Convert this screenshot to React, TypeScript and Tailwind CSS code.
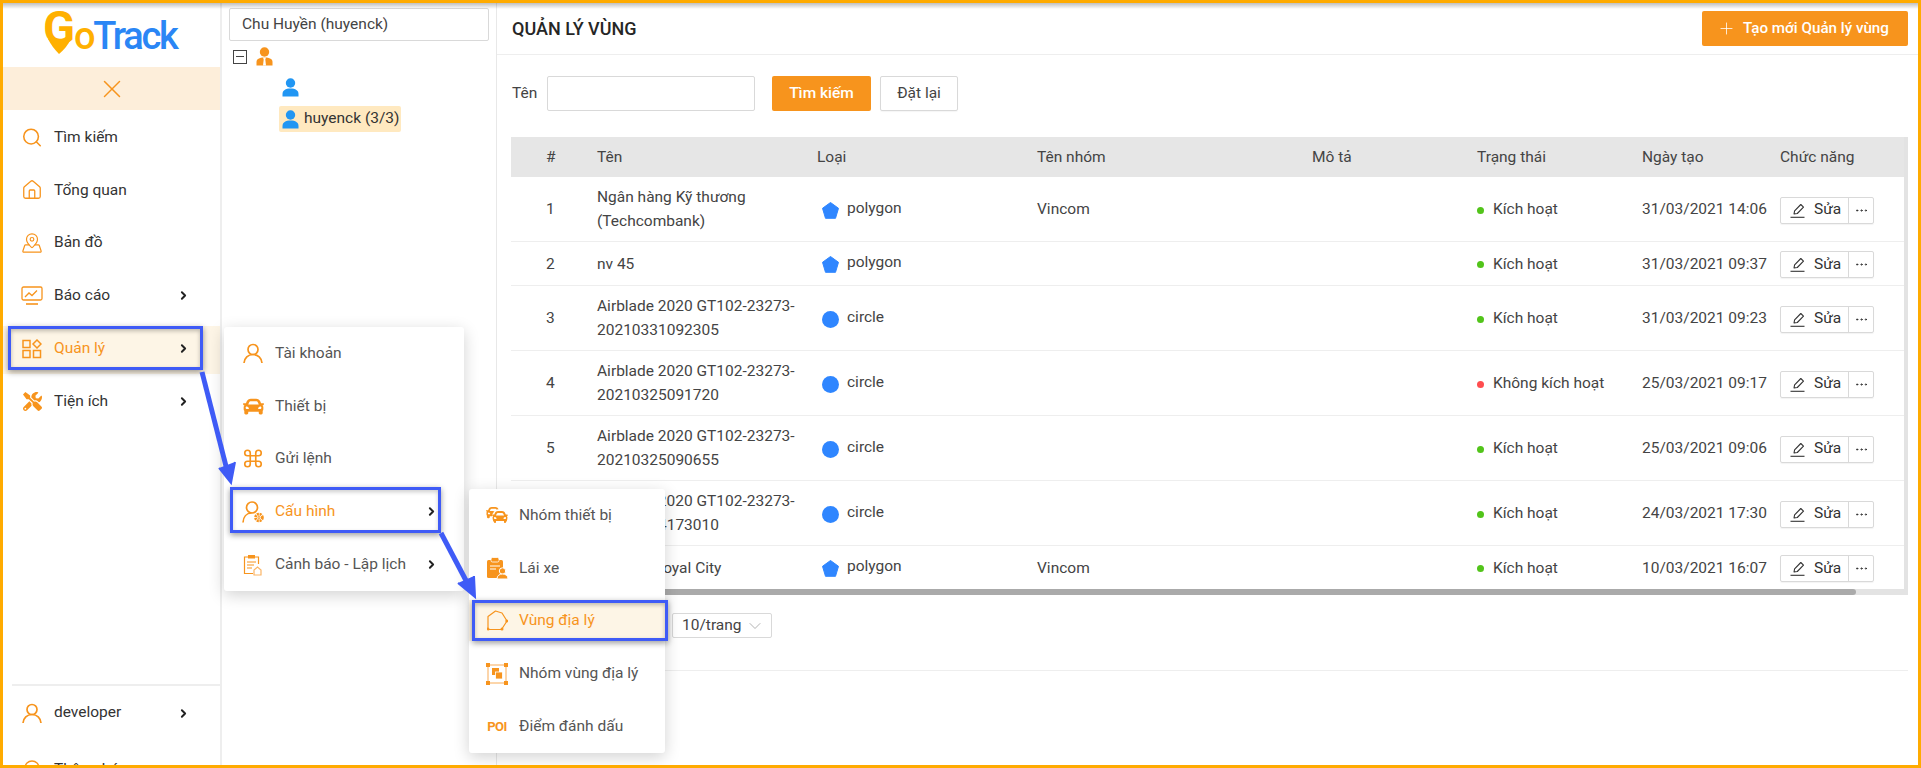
import React from 'react';
import { ChevronRight, Command, House, MapPinned, Plus, Search, X, ChevronDown, Ellipsis } from 'lucide-react';
import { FaCar, FaTools } from 'react-icons/fa';

const ORANGE = '#f7941d';

const Arrow = ({ className = '' }: { className?: string }) => (
  <ChevronRight size={13} strokeWidth={3.6} className={`text-[#222] ${className}`} />
);

function PersonIcon({ color = '#2196f3' }: { color?: string }) {
  return (
    <svg width="17" height="19" viewBox="0 0 17 19" fill={color}>
      <circle cx="8.5" cy="5" r="4.7" />
      <path d="M0.5 18.5v-2.5c0-3.6 3-5.5 8-5.5s8 1.9 8 5.5v2.5z" />
    </svg>
  );
}

function ManagerIcon() {
  return (
    <svg width="17" height="19" viewBox="0 0 17 19">
      <circle cx="8.5" cy="5" r="4.7" fill={ORANGE} />
      <path d="M0.5 18.5v-3.5c0-3 2.6-4.5 8-4.5s8 1.5 8 4.5v3.5z" fill={ORANGE} />
      <path d="M7 10.5h3l-.7 2 .7 6H7l.7-6z" fill="#fff" />
    </svg>
  );
}

function ReportIcon() {
  return (
    <svg width="22" height="20" viewBox="0 0 22 20" fill="none" stroke={ORANGE} strokeWidth="1.3">
      <rect x="1" y="1" width="20" height="13" rx="1.5" />
      <path d="M4 11l4-4 3 2.5 5-5" />
      <path d="M5 18h12" strokeWidth="1.6" />
    </svg>
  );
}

function ManageIcon() {
  return (
    <svg width="20" height="20" viewBox="0 0 20 20" fill="none" stroke={ORANGE} strokeWidth="1.5">
      <rect x="1" y="1.5" width="7" height="7" />
      <rect x="1" y="11.5" width="7" height="7" />
      <rect x="11.5" y="11.5" width="7" height="7" />
      <path d="M15 1l4 4-4 4-4-4z" />
    </svg>
  );
}

function UserOutlineIcon() {
  return (
    <svg width="20" height="21" viewBox="0 0 20 21" fill="none" stroke={ORANGE} strokeWidth="1.7">
      <circle cx="10" cy="6.5" r="5" />
      <path d="M1 20c.4-5 4-8.5 9-8.5s8.600 3.500 9 8.500" />
    </svg>
  );
}

function UserGearIcon() {
  return (
    <svg width="22" height="22" viewBox="0 0 22 22" fill="none" stroke={ORANGE} strokeWidth="1.700">
      <circle cx="10" cy="6.500" r="5.500" />
      <path d="M1 21.500c.3-5.500 3.500-9.500 8.500-9.500" />
      <circle cx="17" cy="16.500" r="3.400" strokeWidth="2.800" strokeDasharray="2 .7" />
      <circle cx="17" cy="16.500" r="1" strokeWidth="1" />
    </svg>
  );
}

function AlertScheduleIcon() {
  return (
    <svg width="20" height="22" viewBox="0 0 20 22" fill="none" stroke="#fbb566" strokeWidth="1.200">
      <path d="M5 3H1.500v16.500H10" stroke={ORANGE} />
      <path d="M12 3h3.500v7" stroke={ORANGE} />
      <rect x="5" y="1" width="7" height="3.500" fill={ORANGE} stroke="none" />
      <path d="M4 8h9M4 11h7M4 14h5" stroke={ORANGE} />
      <path d="M11 21v-5l3.500-3 3.500 3v5z" />
    </svg>
  );
}

function CarsIcon() {
  return (
    <div className="relative w-[23px] h-[20px]">
      <FaCar size={15} color={ORANGE} className="absolute left-0 top-0" />
      <FaCar size={16} color={ORANGE} className="absolute right-0 bottom-0 bg-white rounded-full" />
    </div>
  );
}

function DriverIcon() {
  return (
    <svg width="22" height="22" viewBox="0 0 22 22">
      <rect x="1" y="3" width="16" height="18" rx="1.500" fill={ORANGE} />
      <rect x="5" y="0.500" width="8" height="4.500" rx="1.500" fill={ORANGE} stroke="#fff" strokeWidth="0.800" />
      <path d="M4 9h10M4 12h6" stroke="#fff" strokeWidth="1.200" />
      <circle cx="16.500" cy="14" r="3.200" fill={ORANGE} stroke="#fff" />
      <path d="M11 22c0-3.500 2.500-5 5.500-5s5.500 1.500 5.500 5z" fill={ORANGE} stroke="#fff" />
    </svg>
  );
}

function RegionIcon() {
  return (
    <svg width="21" height="21" viewBox="0 0 21 21" fill="none" stroke={ORANGE} strokeWidth="1.200">
      <path d="M1 19.500V6.500L8.500 1l6.500 2 5 8-5.500 8.500z" strokeLinejoin="round" />
      <circle cx="1" cy="19" r="0.900" fill={ORANGE} />
      <circle cx="15" cy="19" r="0.900" fill={ORANGE} />
      <circle cx="19.800" cy="11" r="0.900" fill={ORANGE} />
    </svg>
  );
}

function RegionGroupIcon() {
  return (
    <svg width="22" height="22" viewBox="0 0 22 22">
      <rect x="2" y="2" width="18" height="18" fill="none" stroke="#fbc88e" strokeWidth="1.500" />
      <rect x="0" y="0" width="4" height="4" fill={ORANGE} />
      <rect x="18" y="0" width="4" height="4" fill={ORANGE} />
      <rect x="0" y="18" width="4" height="4" fill={ORANGE} />
      <rect x="18" y="18" width="4" height="4" fill={ORANGE} />
      <rect x="6" y="5" width="7" height="7" fill={ORANGE} />
      <rect x="9.500" y="9" width="7" height="7" fill={ORANGE} stroke="#fff" strokeWidth="0.800" />
    </svg>
  );
}

function PenIcon() {
  return (
    <svg width="16" height="15" viewBox="0 0 16 15" fill="none" stroke="#333" strokeWidth="1.100">
      <path d="M4 11l.6-3.200L10.800 1.500l2.700 2.700-6.200 6.300z" strokeLinejoin="round" />
      <path d="M0.500 14.300h14" />
    </svg>
  );
}

const sideItems = [
  { label: 'Tìm kiếm', icon: <Search size={25} strokeWidth={1.700} color={ORANGE} /> },
  { label: 'Tổng quan', icon: <House size={24} strokeWidth={1.400} color={ORANGE} /> },
  { label: 'Bản đồ', icon: <MapPinned size={24} strokeWidth={1.300} color={ORANGE} /> },
  { label: 'Báo cáo', icon: <ReportIcon />, more: true },
  { label: 'Quản lý', icon: <ManageIcon />, more: true, active: true },
  { label: 'Tiện ích', icon: <FaTools size={19} color={ORANGE} />, more: true },
];

type MenuItem = { label: string; icon: React.ReactNode; more?: boolean; active?: boolean; tint?: boolean };

const accountMenu: MenuItem[] = [
  { label: 'Tài khoản', icon: <UserOutlineIcon /> },
  { label: 'Thiết bị', icon: <FaCar size={21} color={ORANGE} /> },
  { label: 'Gửi lệnh', icon: <Command size={25} strokeWidth={1.800} color={ORANGE} /> },
  { label: 'Cấu hình', icon: <UserGearIcon />, more: true, active: true },
  { label: 'Cảnh báo - Lập lịch', icon: <AlertScheduleIcon />, more: true },
];

const configMenu: MenuItem[] = [
  { label: 'Nhóm thiết bị', icon: <CarsIcon /> },
  { label: 'Lái xe', icon: <DriverIcon /> },
  { label: 'Vùng địa lý', icon: <RegionIcon />, active: true, tint: true },
  { label: 'Nhóm vùng địa lý', icon: <RegionGroupIcon /> },
  { label: 'Điểm đánh dấu', icon: <span className="text-[13px] font-bold tracking-[-0.500px] text-[#f7941d]">POI</span> },
];

const rows = [
  { name: 'Ngân hàng Kỹ thương (Techcombank)', type: 'polygon', group: 'Vincom', active: true, date: '31/03/2021 14:06' },
  { name: 'nv 45', type: 'polygon', group: '', active: true, date: '31/03/2021 09:37' },
  { name: 'Airblade 2020 GT102-23273-20210331092305', type: 'circle', group: '', active: true, date: '31/03/2021 09:23' },
  { name: 'Airblade 2020 GT102-23273-20210325091720', type: 'circle', group: '', active: false, date: '25/03/2021 09:17' },
  { name: 'Airblade 2020 GT102-23273-20210325090655', type: 'circle', group: '', active: true, date: '25/03/2021 09:06' },
  { name: 'Airblade 2020 GT102-23273-20210324173010', type: 'circle', group: '', active: true, date: '24/03/2021 17:30' },
  { name: 'Vincom Royal City', type: 'polygon', group: 'Vincom', active: true, date: '10/03/2021 16:07' },
];

function Flyout({ items, className, textLeft }: { items: MenuItem[]; className: string; textLeft: string }) {
  return (
    <div className={`absolute z-20 bg-white rounded-[3px] shadow-[0_4px_16px_rgba(0,0,0,0.18)] ${className}`}>
      {items.map((item) => (
        <div key={item.label} className={`flex items-center ${textLeft} ${item.tint ? 'h-[41px] my-[5.900px] bg-[#fdf5e6]' : 'h-[52.800px]'}`}>
          <div className="w-[22px] flex justify-center shrink-0">{item.icon}</div>
          <span className={`ml-[11px] ${item.active ? 'text-[#f7941d]' : 'text-[#555]'}`}>{item.label}</span>
          {item.more && <Arrow className="absolute right-[26px]" />}
        </div>
      ))}
    </div>
  );
}

export default function App() {
  return (
    <div className="relative w-full h-[768px] overflow-hidden border-[3px] border-[#ffab00] bg-white font-[Roboto,sans-serif] text-[15.500px] text-[#444] flex">
      {/* Sidebar */}
      <aside className="w-[219px] shrink-0 flex flex-col justify-between border-r-2 border-[#eee] overflow-hidden">
        <div>
          <div className="h-[64px] relative">
            <svg width="32" height="44" viewBox="0 0 32 44" className="absolute left-[41px] top-[9px]">
              <path d="M4 27C7 33 11 38 15 42 20 38 24 33 27 27z" fill="#ffb000" />
            </svg>
            <span className="absolute left-[40px] top-0 text-[47px] leading-[50px] font-bold text-[#ffb000]">G</span>
            <span className="absolute left-[71px] top-[11px] text-[38px] leading-[44px] font-medium tracking-[-2.300px] text-[#ffb000]">
              o<span className="text-[#2a86f5]">Track</span>
            </span>
          </div>
          <div className="h-[43px] bg-[#fdeeda] flex items-center justify-center">
            <X size={30} strokeWidth={1.200} color={ORANGE} />
          </div>
          <div className="mt-[5px] flex flex-col gap-[4.800px]">
            {sideItems.map((item) => (
              <div key={item.label} className={`h-[48px] flex items-center pl-[18px] pr-[30px] pb-[3px] ${item.active ? 'bg-[#fdf5e6] text-[#f7941d]' : 'text-[#333]'}`}>
                <div className="w-[22px] flex justify-center shrink-0">{item.icon}</div>
                <span className="ml-[11px] flex-1">{item.label}</span>
                {item.more && <Arrow />}
              </div>
            ))}
          </div>
        </div>
        <div className="h-[81px] ml-[9px] border-t-2 border-[#eee]">
          <div className="h-[48px] mt-[5px] flex items-center pl-[9px] pr-[30px] pb-[4px] text-[#333]">
            <div className="w-[22px] flex justify-center shrink-0"><UserOutlineIcon /></div>
            <span className="ml-[11px] flex-1">developer</span>
            <Arrow />
          </div>
          <div className="h-[48px] mt-[7px] flex items-center pl-[9px] text-[#333]">
            <div className="w-[22px] flex justify-center shrink-0">
              <svg width="20" height="22" viewBox="0 0 20 22" fill="none" stroke={ORANGE} strokeWidth="1.400">
                <path d="M3 17V9c0-4 3-7 7-7s7 3 7 7v8zM1 17h18M8 20h4" />
              </svg>
            </div>
            <span className="ml-[11px]">Thông báo</span>
          </div>
        </div>
      </aside>

      {/* Tree */}
      <section className="w-[275px] shrink-0 border-r border-[#e8e8e8] pt-[5px]">
        <div className="mx-[7px] h-[33px] border border-[#d9d9d9] rounded-[2px] flex items-center pl-[12px] text-[#444]">Chu Huyền (huyenck)</div>
        <div className="ml-[11px] mt-[6px] flex items-center gap-[9px] h-[19px]">
          <div className="w-[14px] h-[14px] border border-[#444] flex items-center justify-center">
            <div className="w-[8px] h-[1.500px] bg-[#444]" />
          </div>
          <ManagerIcon />
        </div>
        <div className="ml-[60px] mt-[12px] h-[19px]"><PersonIcon /></div>
        <div className="ml-[57px] mt-[9px] h-[26px] w-[122px] bg-[#ffe9c0] rounded-[2px] flex items-center pl-[3px]">
          <PersonIcon />
          <span className="ml-[5px] text-[#333]">huyenck (3/3)</span>
        </div>
      </section>

      {/* Main */}
      <main className="flex-1 min-w-0 flex flex-col">
        <header className="h-[52px] border-b border-[#eee] flex items-center justify-between pl-[15px] pr-[10px]">
          <h1 className="text-[18px] font-medium text-[#262626]">QUẢN LÝ VÙNG</h1>
          <button className="w-[206px] h-[35px] mb-[1px] bg-[#f7941d] rounded-[2px] text-white font-medium flex items-center pl-[15px]">
            <Plus size={19} strokeWidth={1} />
            <span className="ml-[7px] text-[15.200px]">Tạo mới Quản lý vùng</span>
          </button>
        </header>

        <div className="pl-[14px] pr-[10px]">
          <div className="mt-[21px] flex items-center h-[35px]">
            <span className="ml-[1px] w-[35px]">Tên</span>
            <div className="w-[208px] h-[35px] border border-[#d9d9d9] rounded-[2px]" />
            <button className="ml-[17px] w-[99px] h-[35px] bg-[#f7941d] rounded-[2px] text-white font-medium">Tìm kiếm</button>
            <button className="ml-[9px] w-[78px] h-[35px] border border-[#d9d9d9] rounded-[2px] text-[#444] shadow-[0_1px_1px_rgba(0,0,0,0.04)]">Đặt lại</button>
          </div>

          <div className="mt-[26px] flex">
            <table className="w-[1393px] table-fixed border-collapse">
              <colgroup>
                <col className="w-[86px]" />
                <col className="w-[220px]" />
                <col className="w-[220px]" />
                <col className="w-[275px]" />
                <col className="w-[165px]" />
                <col className="w-[165px]" />
                <col className="w-[138px]" />
                <col className="w-[124px]" />
              </colgroup>
              <thead>
                <tr className="h-[40px] bg-[#e6e6e6] text-left">
                  <th className="pl-[35px] pt-[2px] font-normal">#</th>
                  <th className="pt-[2px] font-normal">Tên</th>
                  <th className="pt-[2px] font-normal">Loại</th>
                  <th className="pt-[2px] font-normal">Tên nhóm</th>
                  <th className="pt-[2px] font-normal">Mô tả</th>
                  <th className="pt-[2px] font-normal">Trạng thái</th>
                  <th className="pt-[2px] font-normal">Ngày tạo</th>
                  <th className="pt-[2px] font-normal">Chức năng</th>
                </tr>
              </thead>
              <tbody>
                {rows.map((row, i) => (
                  <tr key={row.date} className="border-b border-[#eee] last:border-b-0">
                    <td className="pl-[35px] pt-[9px] pb-[7px]">{i + 1}</td>
                    <td className="py-2 pr-[16px] leading-[24px]">{row.name}</td>
                    <td className="pt-[9px] pb-[7px] pl-[5px]">
                      <div className="flex items-center">
                        {row.type === 'polygon' ? (
                          <svg width="17" height="17" viewBox="0 0 17 17" fill="#2f86ff">
                            <path d="M8.500 0.500l8 5.800-3 10h-10l-3-10z" stroke="#2f86ff" strokeLinejoin="round" />
                          </svg>
                        ) : (
                          <div className="w-[17px] h-[17px] rounded-full bg-[#2f86ff]" />
                        )}
                        <span className="ml-[8px] -mt-[3px]">{row.type}</span>
                      </div>
                    </td>
                    <td className="pt-[9px] pb-[7px]">{row.group}</td>
                    <td className="py-2" />
                    <td className="pt-[9px] pb-[7px]">
                      <div className="flex items-center">
                        <div className={`w-[7px] h-[7px] rounded-full ${row.active ? 'bg-[#52c41a]' : 'bg-[#ff4d4f]'}`} />
                        <span className="ml-[9px]">{row.active ? 'Kích hoạt' : 'Không kích hoạt'}</span>
                      </div>
                    </td>
                    <td className="pt-[9px] pb-[7px]">{row.date}</td>
                    <td className="py-2">
                      <div className="flex h-[27px] w-[94px] border border-[#d9d9d9] rounded-[2px] shadow-[0_1px_1px_rgba(0,0,0,0.05)] translate-y-[1px]">
                        <div className="w-[68px] border-r border-[#d9d9d9] flex items-center pl-[9px] text-[#333]">
                          <PenIcon />
                          <span className="ml-[8px]">Sửa</span>
                        </div>
                        <div className="flex-1 flex items-center justify-center">
                          <Ellipsis size={15} strokeWidth={1.600} color="#333" />
                        </div>
                      </div>
                    </td>
                  </tr>
                ))}
              </tbody>
            </table>
            <div className="w-[4px] bg-[#e3e3e3]" />
          </div>
          <div className="h-[6px] w-[1397px] bg-[#e3e3e3]">
            <div className="h-full w-[1345px] bg-[#aaaaaa] rounded-r-[3px]" />
          </div>

          <div className="pt-[18px] pb-[32px] border-b border-[#eee]">
            <div className="ml-[161px] w-[100px] h-[25px] border border-[#d9d9d9] rounded-[2px] flex items-center pl-[9px] pr-[6px] justify-between text-[#444]">
              <span>10/trang</span>
              <ChevronDown size={20} strokeWidth={0.900} color="#999" />
            </div>
          </div>
        </div>
      </main>

      {/* Flyouts */}
      <Flyout items={accountMenu} className="left-[221px] top-[324px] w-[240px]" textLeft="pl-[18px]" />
      <Flyout items={configMenu} className="left-[466px] top-[486px] w-[196px]" textLeft="pl-[17px]" />

      {/* Annotation boxes and arrows */}
      <div className="absolute z-30 left-[5px] top-[323px] w-[195px] h-[44px] border-[3px] border-[#3f5bf6] shadow-[0_2px_6px_rgba(0,0,0,0.4),inset_0_2px_4px_rgba(0,0,0,0.25)]" />
      <div className="absolute z-30 left-[227px] top-[484px] w-[211px] h-[46px] border-[3px] border-[#3f5bf6] shadow-[0_2px_6px_rgba(0,0,0,0.4),inset_0_2px_4px_rgba(0,0,0,0.2)]" />
      <div className="absolute z-30 left-[469px] top-[597px] w-[196px] h-[41px] border-[3px] border-[#3f5bf6] shadow-[0_2px_6px_rgba(0,0,0,0.4),inset_0_2px_4px_rgba(0,0,0,0.25)]" />
      <svg className="absolute z-30 left-[-3px] top-[-3px] pointer-events-none" width="1921" height="768" fill="none" stroke="#3f5bf6" strokeWidth="5">
        <path d="M202 372L228 474" />
        <path d="M219 468L231 483 235 462" strokeLinejoin="miter" fill="#3f5bf6" strokeWidth="2" />
        <path d="M441 533L471 590" />
        <path d="M458 583L475 597 474 576" strokeLinejoin="miter" fill="#3f5bf6" strokeWidth="2" />
      </svg>

      {/* top inner shadow of the frame */}
      <div className="absolute z-40 inset-x-0 top-0 h-[6px] bg-gradient-to-b from-black/25 to-transparent pointer-events-none" />
    </div>
  );
}
